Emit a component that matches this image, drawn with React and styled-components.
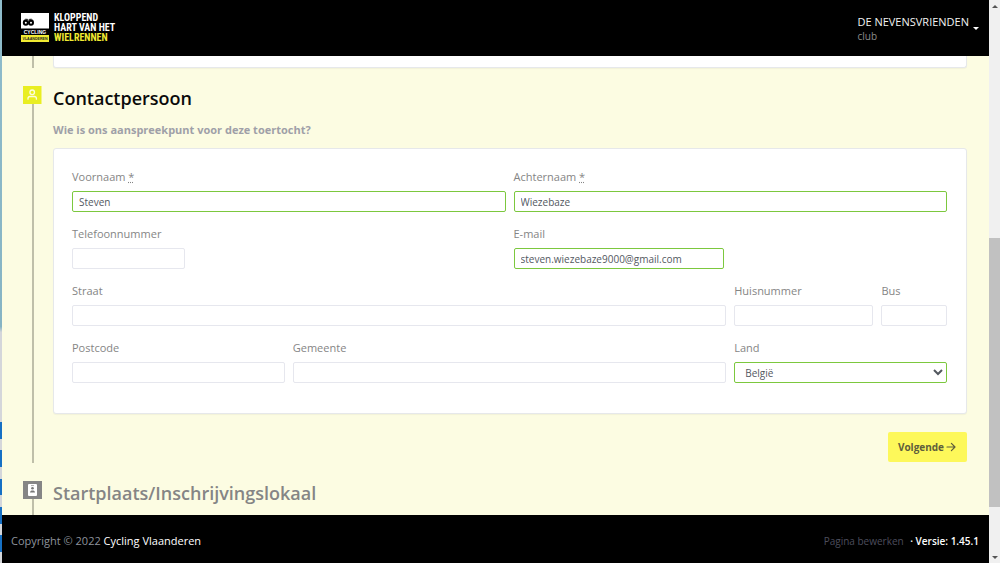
import React from "react";
import styled, { createGlobalStyle } from "styled-components";

const GlobalStyle = createGlobalStyle`
  * {
    box-sizing: border-box;
  }
  body {
    margin: 0;
    font-family: "Segoe UI", "Open Sans", "Noto Sans", sans-serif;
    font-size: 11px;
    line-height: 18px;
    color: #858585;
    background-color: #fcfce2;
  }
  h2, p {
    margin: 0;
  }
  input, select, button {
    font-family: inherit;
  }
`;

const Screen = styled.div`
  display: flex;
  height: 100vh;
  overflow: hidden;
`;

const DesktopEdge = styled.div`
  flex: 0 0 2px;
  background: linear-gradient(
    #8fbccb 0%, #86b4c4 58%, #d4d6da 59%, #d4d6da 75%,
    #1670c4 75%, #1670c4 78%, #d4d6da 78%, #d4d6da 80%,
    #1670c4 80%, #1670c4 83%, #d4d6da 83%, #d4d6da 85%,
    #1670c4 85%, #1670c4 88%, #d4d6da 88%, #d4d6da 90%,
    #1670c4 90%, #1670c4 93%, #d4d6da 93%, #d4d6da 95%,
    #1670c4 95%, #1670c4 98%, #d4d6da 98%
  );
`;

const Page = styled.div`
  flex: 1;
  min-width: 0;
  display: flex;
  flex-direction: column;
`;

const Header = styled.header`
  flex: none;
  display: flex;
  justify-content: space-between;
  align-items: center;
  height: 56px;
  padding: 0 10px 0 18px;
  background-color: #000;
`;

const Brand = styled.a`
  display: flex;
  align-items: center;
  gap: 4px;
  text-decoration: none;
`;

const Slogan = styled.span`
  font-family: "Liberation Sans Narrow", "Roboto Condensed", "Roboto", sans-serif;
  font-size: 10px;
  font-weight: 700;
  line-height: 10px;
  color: #fff;

  span {
    display: block;
  }
  span:last-child {
    color: #f0ea32;
  }
`;

const ClubMenu = styled.button`
  display: flex;
  align-items: center;
  gap: 4px;
  padding: 0;
  border: 0;
  background: none;
  color: #f2f2f2;
  font-size: 11px;
  line-height: 15px;
  text-align: left;

  small {
    display: block;
    font-size: 10px;
    line-height: 14px;
    color: #8c8c8c;
  }
`;

const Caret = styled.span`
  border: 3px solid transparent;
  border-top-color: #fff;
  border-bottom: 0;
`;

const Content = styled.main`
  flex: 1;
  min-height: 0;
  overflow: hidden;
  padding: 0 22px 0 21px;
`;

const Step = styled.section`
  display: grid;
  grid-template-columns: 19px minmax(0, 1fr);
  column-gap: 11px;
  margin-bottom: 18px;
`;

const Marker = styled.div`
  display: flex;
  flex-direction: column;
  align-items: center;

  svg {
    flex: none;
    display: block;
  }
  &::after {
    content: "";
    flex: 1;
    width: 2px;
    background-color: #bfbfa9;
  }
`;

const StepTitle = styled.h2`
  min-height: 35px;
  font-size: 18px;
  font-weight: 600;
  line-height: 24px;
  color: ${(props) => (props.$active ? "#0a0a0a" : "#858585")};
`;

const Question = styled.p`
  margin-bottom: 9px;
  font-size: 11px;
  font-weight: 700;
  color: #9fa0a8;
`;

const Card = styled.div`
  padding: 19px 19px 30px 18px;
  border: 1px solid #e6e8ea;
  border-radius: 3px;
  background-color: #fff;
  box-shadow: 0 1px 1px rgba(0, 0, 0, 0.04);
`;

const PreviousCard = styled(Card)`
  height: 12px;
  padding: 0;
  border-top: 0;
  border-radius: 0 0 3px 3px;
`;

const FormGrid = styled.form`
  display: grid;
  grid-template-columns: repeat(12, minmax(0, 1fr));
  gap: 13px 8px;
`;

const FieldBox = styled.div`
  grid-column: span ${(props) => props.$span};
  display: flex;
  flex-direction: column;
  align-items: flex-start;
  gap: 5px;

  abbr {
    text-decoration: underline dotted;
  }
`;

const Input = styled.input`
  width: 100%;
  max-width: ${(props) => props.$max || "none"};
  height: 21px;
  padding: 0 6px;
  border: 1px solid ${(props) => (props.$valid ? "#7cc83e" : "#e6e7ee")};
  border-radius: 2px;
  background-color: #fff;
  font-size: 10px;
  color: #53585f;
  outline: 0;
`;

const Actions = styled.div`
  display: flex;
  justify-content: flex-end;
  padding: 18px 0 1px;
`;

const NextButton = styled.button`
  display: flex;
  align-items: center;
  gap: 2px;
  height: 30px;
  padding: 0 11px 0 10px;
  border: 0;
  border-radius: 2px;
  background-color: #fdf85a;
  color: #5f5e3c;
  font-size: 10px;
  font-weight: 700;
`;

const Footer = styled.footer`
  flex: none;
  display: flex;
  justify-content: space-between;
  align-items: center;
  height: 48px;
  padding: 3px 10px 0 9px;
  background-color: #000;
  color: #8e939c;

  a {
    color: #fff;
    text-decoration: none;
  }
`;

const Version = styled.span`
  font-size: 10px;
  font-weight: 600;
  color: #fff;

  a {
    margin-right: 4px;
    font-weight: 400;
    color: #4c4d5c;
  }
`;

const Scrollbar = styled.div`
  flex: 0 0 11px;
  display: flex;
  flex-direction: column;
  align-items: center;
  background-color: #f0f0f0;
`;

const ScrollArrow = styled.span`
  flex: none;
  height: 12px;
  padding-top: 5px;

  &::before {
    content: "";
    display: block;
    border: 3px solid transparent;
    border-${(props) => (props.$up ? "bottom" : "top")}-color: #555;
    border-${(props) => (props.$up ? "top" : "bottom")}-width: 0;
  }
`;

const ScrollPart = styled.span`
  flex: ${(props) => props.$size};
  width: 100%;
  background-color: ${(props) => (props.$thumb ? "#c1c1c1" : "transparent")};
`;

const Logo = () => (
  <svg width="30" height="30" viewBox="0 0 30 30" aria-hidden="true">
    <rect x="1" y="0" width="28" height="15.5" fill="#fff" />
    <rect x="1" y="22" width="28" height="7" fill="#f0ea32" />
    <g fill="none" stroke="#000" strokeWidth="2">
      <circle cx="5.8" cy="9.8" r="2" />
      <circle cx="11" cy="9.8" r="2" />
    </g>
    <path d="M3.5 8l2-1.7h2l1 1 1-1h2l2 1.7" fill="none" stroke="#000" strokeWidth="1" />
    <g fontFamily="Liberation Sans" fontWeight="700" textAnchor="middle">
      <text x="15" y="20.8" fontSize="5" fill="#fff">CYCLING</text>
      <text x="15" y="27" fontSize="3.6" fill="#222">VLAANDEREN</text>
    </g>
  </svg>
);

const PersonIcon = () => (
  <svg width="19" height="18" viewBox="0 0 19 18" aria-hidden="true">
    <rect width="18.5" height="18" fill="#e9ee22" />
    <g fill="none" stroke="#fdfde0" strokeWidth="1.3" strokeLinecap="round">
      <circle cx="9.2" cy="6.3" r="2.3" />
      <path d="M5 13.2v-.6c0-1.3.9-2.1 2.1-2.1h4.2c1.2 0 2.1.8 2.1 2.1v.6" />
    </g>
  </svg>
);

const PlaceIcon = () => (
  <svg width="19" height="18" viewBox="0 0 19 18" aria-hidden="true">
    <rect width="19" height="18" fill="#858585" />
    <rect x="5" y="3" width="9" height="12" rx="1" fill="#fff" />
    <circle cx="9.5" cy="7.3" r="1.3" fill="#777" />
    <path d="M7 11.6c0-1.6 1-2.2 2.5-2.2s2.5.6 2.5 2.2z" fill="#777" />
    <path d="M8 4.6h3" stroke="#999" strokeWidth=".8" />
  </svg>
);

const ArrowIcon = () => (
  <svg width="10" height="10" viewBox="0 0 10 10" aria-hidden="true">
    <path d="M1 5h8M5.4 1.4L9 5 5.4 8.6" fill="none" stroke="#5f5e3c" strokeWidth="1.2" strokeLinecap="round" strokeLinejoin="round" />
  </svg>
);

const fields = [
  { id: "voornaam", label: "Voornaam", span: 6, value: "Steven", required: true },
  { id: "achternaam", label: "Achternaam", span: 6, value: "Wiezebaze", required: true },
  { id: "telefoon", label: "Telefoonnummer", span: 6, type: "tel", max: "113px" },
  { id: "email", label: "E-mail", span: 6, type: "email", value: "steven.wiezebaze9000@gmail.com", max: "210px" },
  { id: "straat", label: "Straat", span: 9 },
  { id: "huisnummer", label: "Huisnummer", span: 2 },
  { id: "bus", label: "Bus", span: 1 },
  { id: "postcode", label: "Postcode", span: 3 },
  { id: "gemeente", label: "Gemeente", span: 6 },
];

const Field = ({ id, label, span, type = "text", value, required, max }) => (
  <FieldBox $span={span}>
    <label htmlFor={id}>
      {label}
      {required && <> <abbr title="verplicht">*</abbr></>}
    </label>
    <Input id={id} type={type} defaultValue={value} $valid={Boolean(value)} $max={max} />
  </FieldBox>
);

export default function App() {
  return (
    <Screen>
      <GlobalStyle />
      <DesktopEdge />

      <Page>
        <Header>
          <Brand href="#" aria-label="Cycling Vlaanderen">
            <Logo />
            <Slogan>
              <span>KLOPPEND</span>
              <span>HART VAN HET</span>
              <span>WIELRENNEN</span>
            </Slogan>
          </Brand>
          <ClubMenu type="button">
            <span>
              DE NEVENSVRIENDEN
              <small>club</small>
            </span>
            <Caret />
          </ClubMenu>
        </Header>

        <Content>
          <Step>
            <Marker />
            <PreviousCard />
          </Step>

          <Step>
            <Marker>
              <PersonIcon />
            </Marker>
            <div>
              <StepTitle $active>Contactpersoon</StepTitle>
              <Question>Wie is ons aanspreekpunt voor deze toertocht?</Question>
              <Card>
                <FormGrid id="contact">
                  {fields.map((field) => (
                    <Field key={field.id} {...field} />
                  ))}
                  <FieldBox $span={3}>
                    <label htmlFor="land">Land</label>
                    <Input as="select" id="land" defaultValue="be" $valid>
                      <option value="be">België</option>
                      <option value="nl">Nederland</option>
                    </Input>
                  </FieldBox>
                </FormGrid>
              </Card>
              <Actions>
                <NextButton type="submit" form="contact">
                  Volgende
                  <ArrowIcon />
                </NextButton>
              </Actions>
            </div>
          </Step>

          <Step>
            <Marker>
              <PlaceIcon />
            </Marker>
            <StepTitle>Startplaats/Inschrijvingslokaal</StepTitle>
          </Step>
        </Content>

        <Footer>
          <span>
            Copyright © 2022 <a href="#">Cycling Vlaanderen</a>
          </span>
          <Version>
            <a href="#">Pagina bewerken</a> · Versie: 1.45.1
          </Version>
        </Footer>
      </Page>

      <Scrollbar aria-hidden="true">
        <ScrollArrow $up />
        <ScrollPart $size={226} />
        <ScrollPart $size={269} $thumb />
        <ScrollPart $size={44} />
        <ScrollArrow />
      </Scrollbar>
    </Screen>
  );
}
